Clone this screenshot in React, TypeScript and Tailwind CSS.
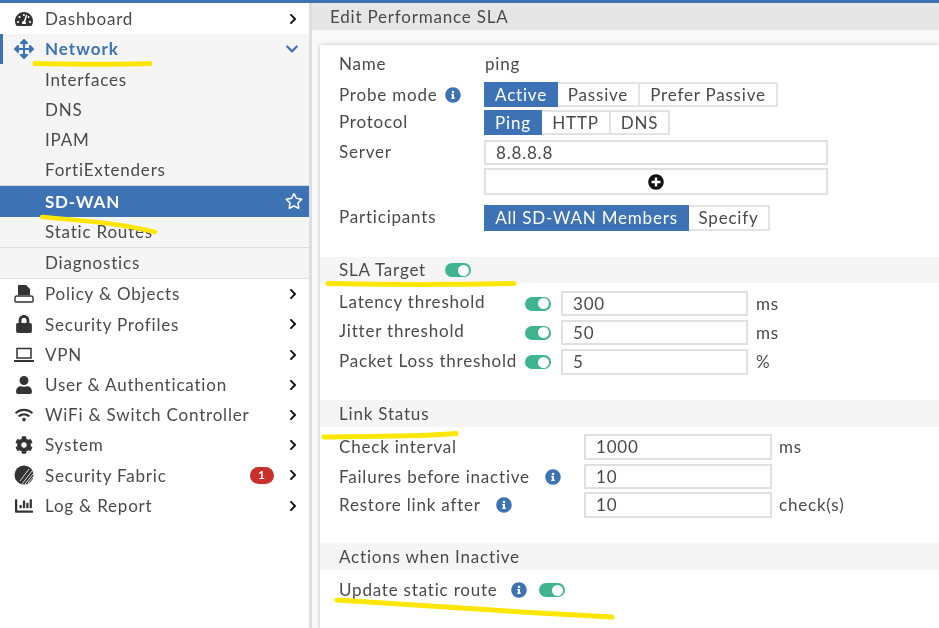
import type { ReactNode } from "react";
import {
  FaTachometerAlt,
  FaArrowsAlt,
  FaChevronRight,
  FaChevronDown,
  FaRegStar,
  FaLock,
  FaUser,
  FaWifi,
  FaCog,
  FaInfoCircle,
  FaPlusCircle,
  FaChartBar,
} from "react-icons/fa";

function PolicyIcon() {
  return (
    <svg viewBox="0 0 20 18" className="w-[21px] h-[18px]">
      <path d="M4 0h8l4 4v6H4z" fill="#333" />
      <path d="M1 16v-3c0-1 1-2 2-2h14c1 0 2 1 2 2v3c0 .6-.4 1-1 1H2c-.6 0-1-.4-1-1z" fill="none" stroke="#333" strokeWidth="1.4" />
    </svg>
  );
}

function LaptopIcon() {
  return (
    <svg viewBox="0 0 20 16" className="w-[20px] h-[16px]" fill="none" stroke="#333" strokeWidth="1.5">
      <rect x="3" y="1.5" width="14" height="9.5" />
      <path d="M0 14h20" strokeWidth="2" />
    </svg>
  );
}

function FabricIcon() {
  return (
    <svg viewBox="0 0 20 20" className="w-[20px] h-[20px]">
      <circle cx="10" cy="10" r="9.5" fill="#333" />
      <path d="M8 19 18 6M11 19l8-10M14 18l5-6M6 16l9-12" stroke="#ddd" strokeWidth="1" />
    </svg>
  );
}

function NavItem({ icon, label, badge }: { icon: ReactNode; label: string; badge?: string }) {
  return (
    <div className="h-[30.2px] flex items-center pl-[14px] pr-[10px] bg-white">
      <span className="w-[20px] flex justify-center text-[#333] text-[18px]">{icon}</span>
      <span className="ml-[11px] flex-1 text-[#4a4a4a]">{label}</span>
      {badge && (
        <span className="mr-[13px] w-[24px] h-[17px] rounded-full bg-[#c9302c] text-white text-[12px] font-bold flex items-center justify-center">
          {badge}
        </span>
      )}
      <FaChevronRight className="text-[12px] text-[#111]" />
    </div>
  );
}

function SubItem({ label }: { label: string }) {
  return <div className="h-[30.2px] flex items-center pl-[45px] text-[#4a4a4a]">{label}</div>;
}

function Segments({ items }: { items: { label: string; w: string; on?: boolean }[] }) {
  return (
    <div className="flex h-full">
      {items.map((s) => (
        <div
          key={s.label}
          className={
            s.on
              ? `${s.w} h-full flex items-center justify-center bg-[#3d72b5] text-white`
              : `${s.w} h-full flex items-center justify-center bg-white border-2 border-l-0 border-[#e3e3e3] text-[#4a4a4a]`
          }
        >
          {s.label}
        </div>
      ))}
    </div>
  );
}

function Toggle() {
  return (
    <span className="w-[26px] h-[14px] rounded-full bg-[#3fb58f] flex items-center justify-end pr-[2px] shrink-0">
      <span className="w-[11px] h-[11px] rounded-full bg-white" />
    </span>
  );
}

function Info() {
  return <FaInfoCircle className="text-[#3d72b5] text-[16px] shrink-0" />;
}

function Band({ children, className }: { children: ReactNode; className: string }) {
  return <div className={`${className} flex items-center pl-[19px] bg-[#f5f5f5] text-[#4a4a4a]`}>{children}</div>;
}

function TextBox({ value, className }: { value: string; className: string }) {
  return (
    <div className={`${className} h-full flex items-center pl-[10px] bg-white border-2 border-[#e0e0e0] text-[#4a4a4a]`}>
      {value}
    </div>
  );
}

function ThresholdRow({ label, value, unit, className }: { label: string; value: string; unit: string; className: string }) {
  return (
    <div className={`${className} flex items-center pl-[19px] text-[#4a4a4a]`}>
      <span className="w-[186px] -mt-[3px]">{label}</span>
      <Toggle />
      <TextBox value={value} className="ml-[10px] w-[187px]" />
      <span className="ml-[8px]">{unit}</span>
    </div>
  );
}

function LinkRow({ label, value, unit, info, className }: { label: string; value: string; unit?: string; info?: boolean; className: string }) {
  return (
    <div className={`${className} flex items-center pl-[19px] text-[#4a4a4a]`}>
      <span className="w-[245px] flex items-center gap-[15px]">
        {label}
        {info && <Info />}
      </span>
      <TextBox value={value} className="w-[188px]" />
      {unit && <span className="ml-[7px]">{unit}</span>}
    </div>
  );
}

export default function App() {
  return (
    <div className="relative w-[939px] h-[628px] overflow-hidden bg-white font-['Lato',sans-serif] text-[17px] tracking-[0.8px] blur-[0.35px]">
      <div className="h-[3px] bg-[#3d72b5]" />
      <div className="flex h-[625px]">
        {/* sidebar */}
        <aside className="w-[309px] shrink-0 bg-white pt-[1px]">
          <NavItem icon={<FaTachometerAlt />} label="Dashboard" />
          <div className="bg-[#f5f5f5] border-b border-[#e0e0e0]">
            <div className="h-[30px] flex items-center pl-[14px] pr-[10px] border-l-[3px] border-[#3d72b5]">
              <span className="w-[20px] -ml-[3px] flex justify-center text-[#3d72b5] text-[20px]">
                <FaArrowsAlt />
              </span>
              <span className="ml-[11px] flex-1 text-[#3d72b5] font-bold tracking-[1px]">Network</span>
              <FaChevronDown className="text-[14px] text-[#3d72b5]" />
            </div>
            <SubItem label="Interfaces" />
            <SubItem label="DNS" />
            <SubItem label="IPAM" />
            <SubItem label="FortiExtenders" />
            <div className="h-[32px] flex items-center pl-[45px] pr-[6px] bg-[#3d72b5] border-t border-[#d8d8d8] text-white font-bold">
              <span className="flex-1">SD-WAN</span>
              <FaRegStar className="text-[18px]" />
            </div>
            <div className="h-[31px] flex items-center pl-[45px] text-[#4a4a4a] border-b border-[#dcdcdc]">Static Routes</div>
            <SubItem label="Diagnostics" />
          </div>
          <NavItem icon={<PolicyIcon />} label="Policy & Objects" />
          <NavItem icon={<FaLock />} label="Security Profiles" />
          <NavItem icon={<LaptopIcon />} label="VPN" />
          <NavItem icon={<FaUser />} label="User & Authentication" />
          <NavItem icon={<FaWifi />} label="WiFi & Switch Controller" />
          <NavItem icon={<FaCog />} label="System" />
          <NavItem icon={<FabricIcon />} label="Security Fabric" badge="1" />
          <NavItem icon={<FaChartBar />} label="Log & Report" />
        </aside>

        {/* main */}
        <main className="flex-1 flex flex-col border-l-[3px] border-[#dedede] bg-[#f9f9f9]">
          <div className="h-[27px] shrink-0 flex items-center pl-[18px] bg-[#e6e6e6] text-[#4a4a4a]">
            Edit Performance SLA
          </div>
          <div className="mt-[15px] ml-[8px] flex-1 bg-white shadow-[0_0_4px_rgba(0,0,0,0.25)] pt-[7px]">
            <div className="h-[24px] flex items-center pl-[19px] text-[#4a4a4a]">
              <span className="w-[146px]">Name</span>
              <span>ping</span>
            </div>
            <div className="h-[25px] mt-[6px] flex items-center pl-[19px] text-[#4a4a4a]">
              <span className="w-[145px] flex items-center gap-[7px]">
                Probe mode
                <Info />
              </span>
              <Segments
                items={[
                  { label: "Active", w: "w-[74px]", on: true },
                  { label: "Passive", w: "w-[82px]" },
                  { label: "Prefer Passive", w: "w-[138px]" },
                ]}
              />
            </div>
            <div className="h-[25px] mt-[3px] flex items-center pl-[19px] text-[#4a4a4a]">
              <span className="w-[145px] -mt-[2px]">Protocol</span>
              <Segments
                items={[
                  { label: "Ping", w: "w-[58px]", on: true },
                  { label: "HTTP", w: "w-[69px]" },
                  { label: "DNS", w: "w-[59px]" },
                ]}
              />
            </div>
            <div className="h-[25px] mt-[5px] flex items-center pl-[19px] text-[#4a4a4a]">
              <span className="w-[145px] -mt-[2px]">Server</span>
              <TextBox value="8.8.8.8" className="w-[344px]" />
            </div>
            <div className="h-[27px] mt-[3px] pl-[164px]">
              <div className="w-[344px] h-full flex items-center justify-center bg-white border-2 border-[#e0e0e0]">
                <FaPlusCircle className="text-[16px] text-[#111]" />
              </div>
            </div>
            <div className="h-[26px] mt-[10px] flex items-center pl-[19px] text-[#4a4a4a]">
              <span className="w-[145px] -mt-[2px]">Participants</span>
              <Segments
                items={[
                  { label: "All SD-WAN Members", w: "w-[205px]", on: true },
                  { label: "Specify", w: "w-[81px]" },
                ]}
              />
            </div>

            <Band className="h-[26px] mt-[26px] gap-[19px]">
              <span>SLA Target</span>
              <Toggle />
            </Band>
            <ThresholdRow className="h-[25px] mt-[8px]" label="Latency threshold" value="300" unit="ms" />
            <ThresholdRow className="h-[25px] mt-[4px]" label="Jitter threshold" value="50" unit="ms" />
            <ThresholdRow className="h-[26px] mt-[4px]" label="Packet Loss threshold" value="5" unit="%" />

            <Band className="h-[27px] mt-[25px]">Link Status</Band>
            <LinkRow className="h-[26px] mt-[7px]" label="Check interval" value="1000" unit="ms" />
            <LinkRow className="h-[25px] mt-[4px]" label="Failures before inactive" value="10" info />
            <LinkRow className="h-[26px] mt-[3px]" label="Restore link after" value="10" unit="check(s)" info />

            <Band className="h-[27px] mt-[25px]">Actions when Inactive</Band>
            <div className="h-[24px] mt-[8px] flex items-center pl-[19px] text-[#4a4a4a]">
              <span>Update static route</span>
              <span className="ml-[13px]">
                <Info />
              </span>
              <span className="ml-[12px]">
                <Toggle />
              </span>
            </div>
          </div>
        </main>
      </div>

      {/* yellow marker strokes drawn over the screenshot */}
      <svg className="absolute inset-0 pointer-events-none" width="939" height="628" fill="none" stroke="#ffe600" strokeLinecap="round">
        <path d="M35 63.5C70 64 115 65 150 63.5" strokeWidth="5" />
        <path d="M42 217C85 221 120 223 155 232" strokeWidth="4.5" />
        <path d="M328 283.5C390 285 450 285 514 283.5" strokeWidth="5" />
        <path d="M324 437C370 436 420 437 456 433.5" strokeWidth="5" />
        <path d="M337 600C420 606 520 612 612 617" strokeWidth="5" />
      </svg>
    </div>
  );
}
